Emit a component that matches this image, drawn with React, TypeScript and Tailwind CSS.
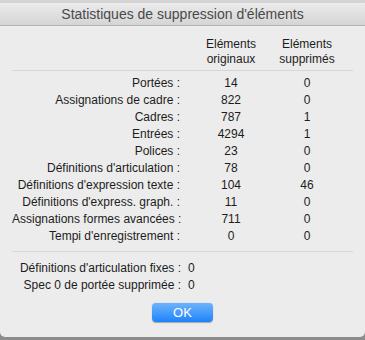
const rows: [string, string, string][] = [
  ["Portées :", "14", "0"],
  ["Assignations de cadre :", "822", "0"],
  ["Cadres :", "787", "1"],
  ["Entrées :", "4294", "1"],
  ["Polices :", "23", "0"],
  ["Définitions d'articulation :", "78", "0"],
  ["Définitions d'expression texte :", "104", "46"],
  ["Définitions d'express. graph. :", "11", "0"],
  ["Assignations formes avancées :", "711", "0"],
  ["Tempi d'enregistrement :", "0", "0"],
];

const extra: [string, string][] = [
  ["Définitions d'articulation fixes :", "0"],
  ["Spec 0 de portée supprimée :", "0"],
];

export default function App() {
  return (
    <div
      className="w-[365px] h-[340px] flex flex-col bg-[#8c8c8c] overflow-hidden"
      style={{ fontFamily: '"Liberation Sans", Arial, sans-serif' }}
    >
      <div className="h-[3px] bg-[#d4d4d4]" />
      <div className="flex-1 flex flex-col bg-[#ececec] rounded-b-[5px]">
        <div className="h-[23px] flex items-center justify-center bg-gradient-to-b from-[#ebebeb] to-[#d5d5d5] border-b border-[#b4b4b4] text-[14px] text-[#4a4a4a]">
          Statistiques de suppression d'éléments
        </div>

        <div className="flex flex-col px-3 text-[12px] text-[#1c1c1c]">
          <div className="flex pt-[11px] pb-[3px] border-b border-[#d6d6d6] leading-[15px]">
            <div className="w-[184px]" />
            <div className="w-[70px] text-center">
              Eléments
              <br />
              originaux
            </div>
            <div className="w-[82px] text-center">
              Eléments
              <br />
              supprimés
            </div>
          </div>

          <div className="flex flex-col pt-[3px] pb-[7px] border-b border-[#d6d6d6]">
            {rows.map(([label, a, b]) => (
              <div key={label} className="flex h-[17px] items-center">
                <div className="w-[168px] text-right whitespace-nowrap">{label}</div>
                <div className="w-[16px]" />
                <div className="w-[70px] text-center">{a}</div>
                <div className="w-[82px] text-center">{b}</div>
              </div>
            ))}
          </div>

          <div className="flex flex-col pt-[7px]">
            {extra.map(([label, v]) => (
              <div key={label} className="flex h-[17px] items-center">
                <div className="w-[169px] text-right whitespace-nowrap">{label}</div>
                <div className="pl-[7px]">{v}</div>
              </div>
            ))}
          </div>

          <div className="flex justify-center pt-[10px]">
            <button className="w-[61px] h-[19px] rounded-[4px] bg-gradient-to-b from-[#6cb3fa] to-[#1a82fb] text-white text-[13px] leading-none shadow-[0_0.5px_1px_rgba(0,0,0,0.3)]">
              OK
            </button>
          </div>
        </div>
      </div>
      <div className="h-[3px]" />
    </div>
  );
}
